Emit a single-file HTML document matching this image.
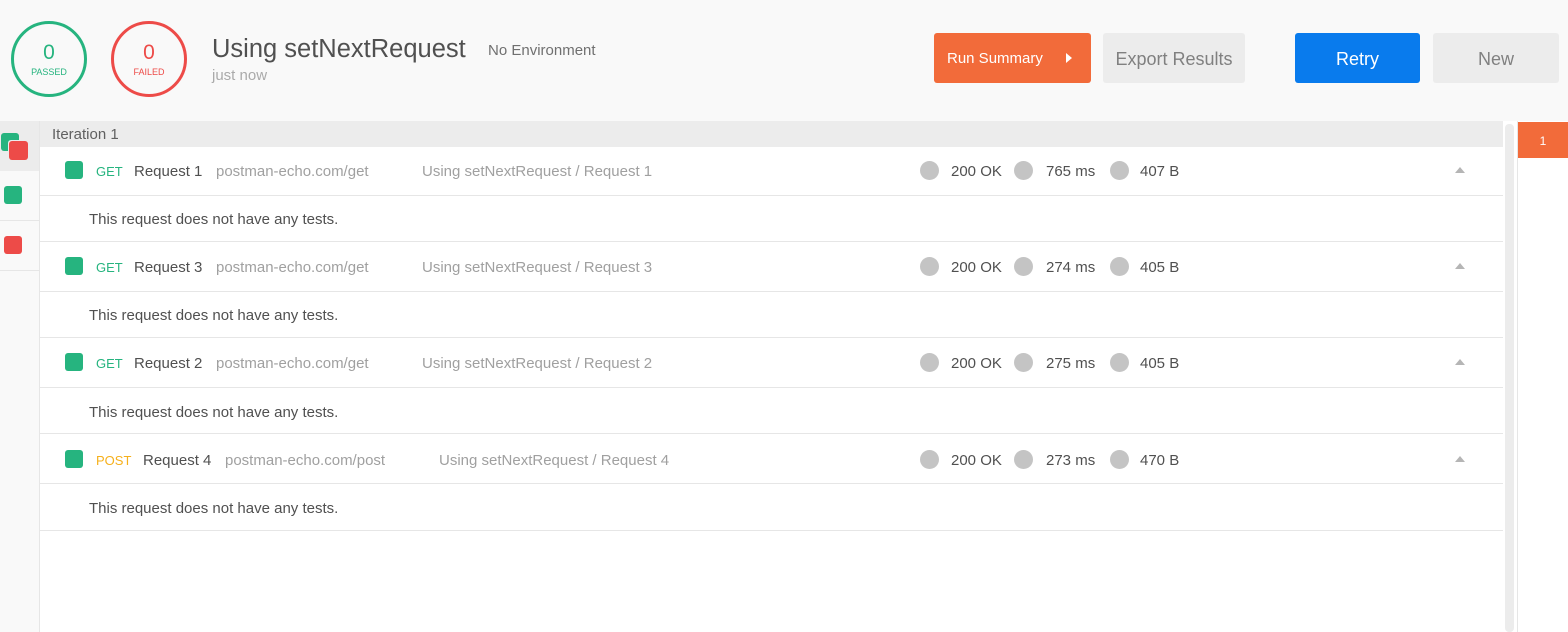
<!DOCTYPE html>
<html><head><meta charset="utf-8"><style>
*{margin:0;padding:0;box-sizing:border-box}
body{width:1568px;height:632px;overflow:hidden;background:#fff;font-family:"Liberation Sans",sans-serif;position:relative;color:#505050}
.a{position:absolute;white-space:nowrap}
.hdr{left:0;top:0;width:1568px;height:121px;background:#f9f9f9}
.circ{width:76px;height:76px;border-radius:50%;border:3px solid;text-align:center}
.btn{height:50px;border-radius:3px;font-size:18px;line-height:50px;text-align:center}
.sq{width:18px;height:18px;border-radius:3px;background:#26b47f}
.line{height:1px;background:#e6e6e6;left:40px;width:1463px}
.t{font-size:15px;line-height:20px}
.m{font-size:13px}
.dot{width:19px;height:19px;border-radius:50%;background:#c4c4c4}
.tri{width:0;height:0;border-left:5px solid transparent;border-right:5px solid transparent;border-bottom:6px solid #b5b5b5}
</style></head><body>
<div class="a hdr"></div>
<div class="a circ" style="left:11px;top:21px;border-color:#26b47f;color:#26b47f"><div style="font-size:21px;margin-top:18px;line-height:22px">0</div><div style="font-size:9px;margin-top:3px">PASSED</div></div>
<div class="a circ" style="left:111px;top:21px;border-color:#ed4b48;color:#ed4b48"><div style="font-size:21px;margin-top:18px;line-height:22px">0</div><div style="font-size:9px;margin-top:3px">FAILED</div></div>
<div class="a" style="left:212px;top:35px;font-size:25.5px;color:#505050">Using setNextRequest</div>
<div class="a" style="left:488px;top:42px;font-size:15px;color:#707070">No Environment</div>
<div class="a" style="left:212px;top:67px;font-size:15px;color:#aaa">just now</div>
<div class="a btn" style="left:934px;top:33px;width:157px;background:#f26b3a;color:#fff;font-size:15px;line-height:52px;text-align:left;padding-left:13px">Run Summary<span style="position:absolute;left:132px;top:20px;border-top:5px solid transparent;border-bottom:5px solid transparent;border-left:6px solid #fff"></span></div>
<div class="a btn" style="left:1103px;top:33px;width:142px;background:#ececec;color:#808080;line-height:52px">Export Results</div>
<div class="a btn" style="left:1295px;top:33px;width:125px;background:#097bed;color:#fff;line-height:52px">Retry</div>
<div class="a btn" style="left:1433px;top:33px;width:126px;background:#ececec;color:#808080;line-height:52px">New</div>

<div class="a" style="left:0;top:121px;width:40px;height:511px;background:#f9f9f9;border-right:1px solid #e6e6e6"></div>
<div class="a" style="left:0;top:121px;width:39px;height:50px;background:#ececec"></div>
<div class="a" style="left:0;top:220px;width:39px;height:1px;background:#e6e6e6"></div>
<div class="a" style="left:0;top:270px;width:39px;height:1px;background:#e6e6e6"></div>
<div class="a" style="left:1px;top:133px;width:18px;height:18px;border-radius:3px;background:#26b47f"></div>
<div class="a" style="left:9px;top:141px;width:19px;height:19px;border-radius:3px;background:#ed4b48;box-shadow:-1px -1px 0 #ececec"></div>
<div class="a" style="left:4px;top:186px;width:18px;height:18px;border-radius:3px;background:#26b47f"></div>
<div class="a" style="left:4px;top:236px;width:18px;height:18px;border-radius:3px;background:#ed4b48"></div>

<div class="a" style="left:40px;top:121px;width:1463px;height:26px;background:#ececec"></div>
<div class="a" style="left:52px;top:126px;font-size:15px;color:#606060">Iteration 1</div>

<div class="a" style="left:1505px;top:124px;width:9px;height:508px;background:#ececec;border-radius:4px"></div>
<div class="a" style="left:1517px;top:121px;width:1px;height:511px;background:#e6e6e6"></div>
<div class="a" style="left:1518px;top:122px;width:50px;height:36px;background:#f26b3a;color:#fff;font-size:12px;line-height:38px;text-align:center">1</div>

<div class="a sq" style="left:65px;top:161px"></div>
<div class="a t m" style="left:96px;top:162px;color:#26b47f">GET</div>
<div class="a t" style="left:134px;top:162px;color:#505050">Request 1</div>
<div class="a t" style="left:216px;top:162px;color:#a0a0a0">postman-echo.com/get</div>
<div class="a t" style="left:422px;top:162px;color:#a0a0a0">Using setNextRequest / Request 1</div>
<div class="a dot" style="left:920px;top:161px"></div><div class="a t" style="left:951px;top:162px">200 OK</div>
<div class="a dot" style="left:1014px;top:161px"></div><div class="a t" style="left:1046px;top:162px">765 ms</div>
<div class="a dot" style="left:1110px;top:161px"></div><div class="a t" style="left:1140px;top:162px">407 B</div>
<div class="a tri" style="left:1455px;top:167px"></div>
<div class="a line" style="top:195px"></div>
<div class="a t" style="left:89px;top:210px">This request does not have any tests.</div>
<div class="a line" style="top:241px"></div>

<div class="a sq" style="left:65px;top:257px"></div>
<div class="a t m" style="left:96px;top:258px;color:#26b47f">GET</div>
<div class="a t" style="left:134px;top:258px;color:#505050">Request 3</div>
<div class="a t" style="left:216px;top:258px;color:#a0a0a0">postman-echo.com/get</div>
<div class="a t" style="left:422px;top:258px;color:#a0a0a0">Using setNextRequest / Request 3</div>
<div class="a dot" style="left:920px;top:257px"></div><div class="a t" style="left:951px;top:258px">200 OK</div>
<div class="a dot" style="left:1014px;top:257px"></div><div class="a t" style="left:1046px;top:258px">274 ms</div>
<div class="a dot" style="left:1110px;top:257px"></div><div class="a t" style="left:1140px;top:258px">405 B</div>
<div class="a tri" style="left:1455px;top:263px"></div>
<div class="a line" style="top:291px"></div>
<div class="a t" style="left:89px;top:306px">This request does not have any tests.</div>
<div class="a line" style="top:337px"></div>

<div class="a sq" style="left:65px;top:353px"></div>
<div class="a t m" style="left:96px;top:354px;color:#26b47f">GET</div>
<div class="a t" style="left:134px;top:354px;color:#505050">Request 2</div>
<div class="a t" style="left:216px;top:354px;color:#a0a0a0">postman-echo.com/get</div>
<div class="a t" style="left:422px;top:354px;color:#a0a0a0">Using setNextRequest / Request 2</div>
<div class="a dot" style="left:920px;top:353px"></div><div class="a t" style="left:951px;top:354px">200 OK</div>
<div class="a dot" style="left:1014px;top:353px"></div><div class="a t" style="left:1046px;top:354px">275 ms</div>
<div class="a dot" style="left:1110px;top:353px"></div><div class="a t" style="left:1140px;top:354px">405 B</div>
<div class="a tri" style="left:1455px;top:359px"></div>
<div class="a line" style="top:387px"></div>
<div class="a t" style="left:89px;top:403px">This request does not have any tests.</div>
<div class="a line" style="top:433px"></div>

<div class="a sq" style="left:65px;top:450px"></div>
<div class="a t m" style="left:96px;top:451px;color:#f6b01c">POST</div>
<div class="a t" style="left:143px;top:451px;color:#505050">Request 4</div>
<div class="a t" style="left:225px;top:451px;color:#a0a0a0">postman-echo.com/post</div>
<div class="a t" style="left:439px;top:451px;color:#a0a0a0">Using setNextRequest / Request 4</div>
<div class="a dot" style="left:920px;top:450px"></div><div class="a t" style="left:951px;top:451px">200 OK</div>
<div class="a dot" style="left:1014px;top:450px"></div><div class="a t" style="left:1046px;top:451px">273 ms</div>
<div class="a dot" style="left:1110px;top:450px"></div><div class="a t" style="left:1140px;top:451px">470 B</div>
<div class="a tri" style="left:1455px;top:456px"></div>
<div class="a line" style="top:483px"></div>
<div class="a t" style="left:89px;top:499px">This request does not have any tests.</div>
<div class="a line" style="top:530px"></div>
</body></html>
